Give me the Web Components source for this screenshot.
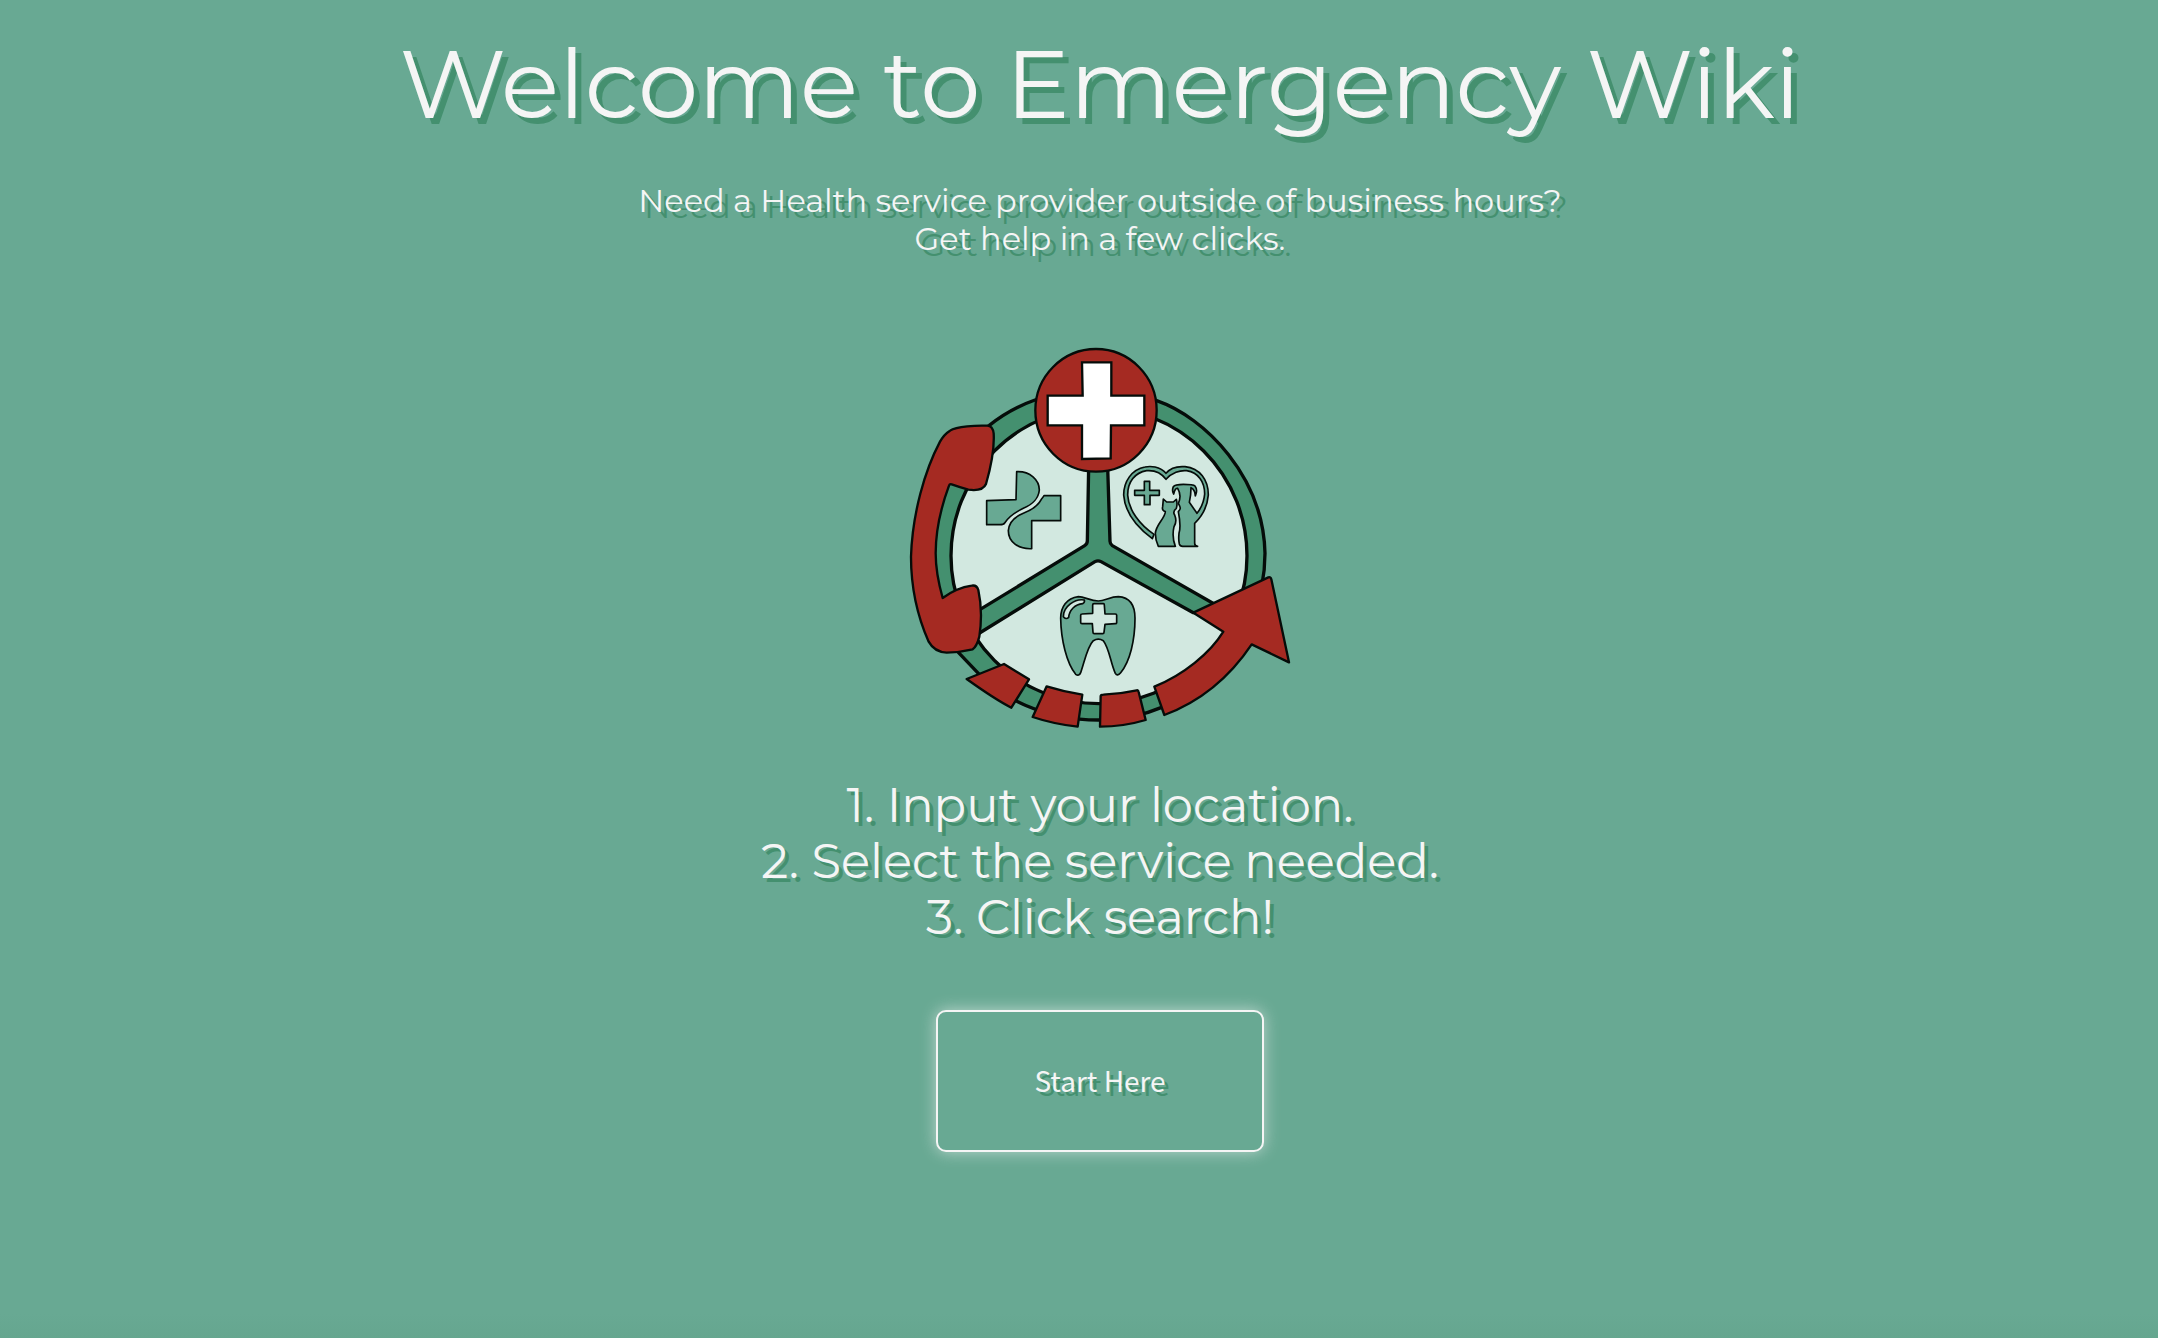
<!DOCTYPE html>
<html lang="en">
<head>
<meta charset="utf-8">
<title>Emergency Wiki</title>
<style>
  :root {
    --page: #68a993;
    --page-edge: #65a68f;
    --deep: #44906f;
    --mint: #d2e8e0;
    --red: #a52a22;
    --text: whitesmoke;
    --display: Montserrat, Inter, sans-serif;
  }
  html { background: var(--page); }
  body { margin: 0; color: var(--text); font-family: var(--display); }
</style>
</head>
<body>
<wiki-landing>
  <wiki-hero>
    Welcome to Emergency Wiki
    <span slot="lead">Need a Health service provider outside of business hours?<br>Get help in a few clicks.</span>
  </wiki-hero>
  <wiki-logo></wiki-logo>
  <wiki-steps>
    <wiki-step number="1">Input your location.</wiki-step>
    <wiki-step number="2">Select the service needed.</wiki-step>
    <wiki-step number="3">Click search!</wiki-step>
  </wiki-steps>
  <wiki-button>Start Here</wiki-button>
</wiki-landing>

<script>
class WikiElement extends HTMLElement {
  constructor() {
    super();
    this.attachShadow({ mode: "open" }).innerHTML = this.constructor.markup;
  }
}

customElements.define("wiki-landing", class extends WikiElement {
  static markup = `
    <style>
      :host {
        display: block; min-height: 100vh; box-sizing: border-box; padding: 24px 0 40px 42px;
        background: linear-gradient(to top, var(--page-edge), var(--page) 24px);
      }
      main { display: flex; flex-direction: column; align-items: center; }
    </style>
    <main><slot></slot></main>`;
});

customElements.define("wiki-hero", class extends WikiElement {
  static markup = `
    <style>
      :host { display: block; text-align: center; text-shadow: 6px 6px var(--deep); }
      h1 { margin: 0; font-size: 96px; font-weight: 400; line-height: 120px; }
      p { margin: 38px 0 0; font-size: 32px; line-height: 38px; }
    </style>
    <h1><slot></slot></h1>
    <p><slot name="lead"></slot></p>`;
});

customElements.define("wiki-logo", class extends WikiElement {
  static markup = `
    <style>
      :host { display: block; width: 400px; margin-top: 82px; }
      svg { display: block; width: 100%; stroke: #050c09; stroke-width: 7; stroke-linejoin: round; }
      .deep { fill: var(--deep); }
      .mint { fill: var(--mint); }
      .red { fill: var(--red); }
      .page { fill: var(--page); }
      .bold { stroke-width: 10; }
      .fine { stroke-width: 5; }
    </style>
    <svg viewBox="0 0 1200 1200" role="img" aria-label="Emergency Wiki logo">
      <g class="bold">
        <path class="deep" d="M405 180Q588 120 770 182C915 232 1090 410 1095 640C1095 915 870 1140 595 1140C430 1140 300 1070 235 1000L175 937C40 760 40 430 268 256Q330 206 405 180Z"/>
        <circle class="mint" cx="597" cy="647" r="444"/>
        <path class="deep" d="M566 380L562 603Q562 612 554 617L200 833V903L585 665Q594 660 603 665L880 818L990 819L637 617Q630 612 630 604L623 380Z"/>
      </g>
      <path class="red" d="M150 272C170 258 230 256 262 257Q278 258 281 280C284 330 270 390 258 432Q248 455 205 449Q175 440 155 433Q149 431 147 437C120 510 107 570 107 640C107 690 117 735 128 774C150 758 180 742 215 737Q230 734 235 750C246 800 244 850 238 890Q230 920 218 928Q180 937 140 938Q103 936 86 905C55 835 33 745 33 650C37 520 75 390 120 305Q132 283 150 272Z"/>
      <path class="red" d="M880 818L1105 712Q1112 710 1114 718L1167 967L1055 913C990 1010 900 1085 793 1125L763 1040C850 1005 930 940 970 875Z"/>
      <path class="red" d="M200 1017L312 972L387 1018L334 1103Q285 1078 200 1017Z"/>
      <path class="red" d="M440 1039Q495 1056 547 1064L533 1160Q460 1152 398 1131Z"/>
      <path class="red" d="M602 1068Q603 1064 610 1064Q660 1062 710 1051Q715 1050 716 1056L737 1140Q670 1160 600 1160Z"/>
      <ellipse class="red" cx="588" cy="211" rx="182" ry="184"/>
      <path fill="#fff" stroke-linejoin="miter" d="M546 67H634V167H733V256H633L632 355L546 357V256H443V167H548Z"/>
      <g class="page fine">
        <path d="M350 395C390 393 418 420 418 450C415 480 395 494 370 505C345 517 325 532 314 549Q311 554 300 554H260V482L348 479Z"/>
        <path d="M432 467H482V542H395V626C355 628 325 605 325 572C327 545 345 530 370 520C400 508 415 495 424 478Q429 472 432 467Z"/>
        <path d="M798 400C780 378 750 378 735 381C695 388 671 425 671 465C675 520 715 565 757 596L762 583C720 555 685 510 683 465C683 425 705 398 740 392C765 390 785 400 798 418C815 398 840 390 860 392C895 398 914 425 914 462C912 485 903 505 891 520L868 487C872 470 873 455 873 443Q885 448 886 468Q894 450 885 438Q880 433 850 433Q825 433 820 440Q815 452 821 462Q825 443 833 445C842 460 842 475 835 490C840 500 845 505 835 515C840 540 843 560 837 580Q835 600 838 612Q840 619 848 619H893Q884 618 884 610V550C905 530 922 500 925 465C925 420 900 385 855 380C830 378 810 385 798 400Z"/>
        <path d="M790 477L800 486H820L829 478Q833 492 829 505Q817 515 824 525Q832 545 822 560Q815 590 826 619H775Q766 600 766 580C768 553 795 535 796 515Q785 512 788 500Z"/>
        <path d="M733 424H749V451H778V466H750V494H733V466H704V451H733Z"/>
        <path d="M595 783C570 783 555 770 535 770C500 775 482 800 482 835C483 900 500 970 527 1003Q537 1010 542 998C555 960 562 920 580 902Q595 893 610 902C628 925 632 970 646 1000Q652 1010 662 998C690 965 705 900 705 835C705 795 690 772 655 770C630 770 615 783 595 783Z"/>
        <path class="mint" d="M553 780C525 775 490 800 490 830Q498 840 506 832C508 810 525 793 548 791Q555 788 553 780Z"/>
        <path class="mint" d="M582 791H610Q613 791 613 795L615 822H646Q650 822 650 826V848Q650 851 646 851L615 853L612 877Q612 881 608 881H583Q579 881 579 877L577 851H546Q542 851 542 847V826Q542 822 546 822L578 820V795Q578 791 582 791Z"/>
      </g>
    </svg>`;
});

customElements.define("wiki-steps", class extends WikiElement {
  static markup = `
    <style>
      :host { display: block; margin-top: 37px; text-align: center; font-size: 48px; line-height: 56px; text-shadow: 4px 4px var(--deep); }
      div { display: flex; flex-direction: column; }
    </style>
    <div role="list"><slot></slot></div>`;
});

customElements.define("wiki-step", class extends WikiElement {
  static markup = `
    <style>:host { display: block; }</style>
    <span></span> <slot></slot>`;
  connectedCallback() {
    this.setAttribute("role", "listitem");
    this.shadowRoot.querySelector("span").textContent = this.getAttribute("number") + ".";
  }
});

customElements.define("wiki-button", class extends WikiElement {
  static markup = `
    <style>
      :host { display: block; margin-top: 65px; }
      button {
        display: block; box-sizing: border-box; padding: 47px 96px 49px; cursor: pointer;
        border: 2px solid var(--text); border-radius: 10px; background: var(--page);
        box-shadow: 0 0 16px rgba(245, 245, 245, .6); color: var(--text);
        font: 28px/42px "Source Sans Pro", "Noto Sans CJK SC", sans-serif;
        text-shadow: 4px 4px var(--deep);
      }
    </style>
    <button type="button"><slot></slot></button>`;
});
</script>
</body>
</html>
